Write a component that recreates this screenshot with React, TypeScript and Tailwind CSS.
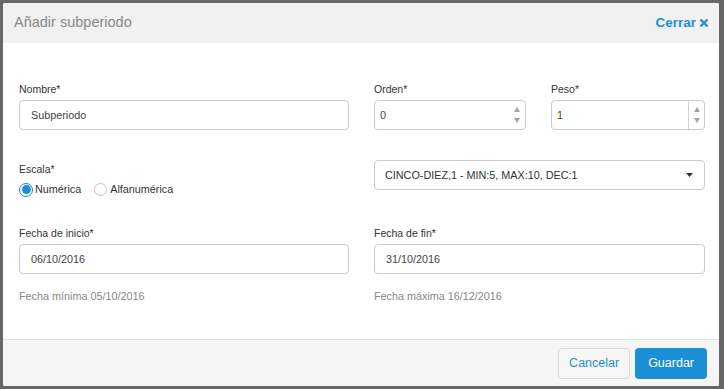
import React from 'react';

const font = { fontFamily: '"Liberation Sans", Arial, sans-serif' };

function Label({ children }: { children: React.ReactNode }) {
  return <div className="text-[10.5px] leading-[15px] text-[#333] mb-[3px]">{children}</div>;
}

function TextBox({ value }: { value: string }) {
  return (
    <div className="h-[30px] border border-[#ccc] rounded-[4px] bg-white flex items-center pl-[11px] text-[10.8px] text-[#444]">
      {value}
    </div>
  );
}

function NumberBox({ value, divider }: { value: string; divider?: boolean }) {
  return (
    <div className="h-[30px] border border-[#ccc] rounded-[4px] bg-white flex items-center text-[10.8px] text-[#444]">
      <span className="flex-1 pl-[5px]">{value}</span>
      <div
        className={
          'h-full w-[16px] flex flex-col items-center justify-center gap-[6px] ' +
          (divider ? 'border-l border-[#d4d4d4]' : '')
        }
      >
        <svg width="6" height="5" viewBox="0 0 6 5">
          <path d="M3 0L6 5H0z" fill="#a3a3a3" />
        </svg>
        <svg width="6" height="5" viewBox="0 0 6 5">
          <path d="M0 0H6L3 5z" fill="#a3a3a3" />
        </svg>
      </div>
    </div>
  );
}

export default function App() {
  return (
    <div style={font} className="w-[724px] h-[389px] bg-[#676767] pt-[3px] pl-[3px] overflow-hidden">
      <div className="w-[716px] h-[383px] bg-white flex flex-col rounded-[2px] overflow-hidden">
        {/* header */}
        <div className="h-[40px] bg-[#f1f1f1] flex items-center justify-between pl-[11px] pr-[10px]">
          <span className="text-[14.5px] text-[#888]">Añadir subperiodo</span>
          <button className="flex items-center gap-[3px] text-[13.5px] font-bold text-[#1e8fd5]">
            Cerrar
            <svg width="10" height="10" viewBox="0 0 10 10">
              <path d="M1.5 1.5L8.5 8.5M8.5 1.5L1.5 8.5" stroke="#1e8fd5" strokeWidth="2.4" />
            </svg>
          </button>
        </div>

        {/* body */}
        <div className="flex-1 pl-4 pr-[14px] pt-[39px]">
          <div className="grid grid-cols-[330px_331px] gap-x-[25px]">
            <div>
              <Label>Nombre*</Label>
              <TextBox value="Subperiodo" />
            </div>
            <div className="grid grid-cols-[152px_154px] gap-x-[25px]">
              <div>
                <Label>Orden*</Label>
                <NumberBox value="0" />
              </div>
              <div>
                <Label>Peso*</Label>
                <NumberBox value="1" divider />
              </div>
            </div>
          </div>

          <div className="grid grid-cols-[330px_331px] gap-x-[25px] mt-[30px]">
            <div className="pt-[2px]">
              <div className="text-[10.5px] leading-[15px] text-[#333]">Escala*</div>
              <div className="mt-[4px] h-[17px] flex items-center text-[10.8px] text-[#333]">
                <span className="w-[14px] h-[14px] rounded-full border border-[#1a84cf] bg-white p-[1.5px] flex">
                  <span className="flex-1 rounded-full bg-[#1e8fd5]" />
                </span>
                <span className="ml-[2px]">Numérica</span>
                <span className="ml-[13px] w-[13px] h-[13px] rounded-full border border-[#c4c4c4] bg-white" />
                <span className="ml-[3px]">Alfanumérica</span>
              </div>
            </div>
            <div>
              <div className="h-[30px] border border-[#ccc] rounded-[4px] bg-white flex items-center pl-[10px] pr-[11px] text-[10.8px] text-[#333]">
                <span className="flex-1">CINCO-DIEZ,1 - MIN:5, MAX:10, DEC:1</span>
                <svg width="7" height="4" viewBox="0 0 7 4">
                  <path d="M0 0H7L3.5 4z" fill="#333" />
                </svg>
              </div>
            </div>
          </div>

          <div className="grid grid-cols-[330px_331px] gap-x-[25px] mt-[28px]">
            <div>
              <Label>Fecha de inicio*</Label>
              <TextBox value="06/10/2016" />
              <div className="mt-[15px] text-[10.8px] leading-[15px] text-[#888]">Fecha mínima 05/10/2016</div>
            </div>
            <div>
              <Label>Fecha de fin*</Label>
              <TextBox value="31/10/2016" />
              <div className="mt-[15px] text-[10.8px] leading-[15px] text-[#888]">Fecha máxima 16/12/2016</div>
            </div>
          </div>
        </div>

        {/* footer */}
        <div className="h-[47px] border-t border-[#e3e3e3] bg-[#f5f5f5] flex items-center justify-end gap-[5px] pr-[12px]">
          <button className="h-[31px] px-[10px] rounded-[4px] border border-[#dadada] bg-[#f6f6f6] text-[12.5px] text-[#1e8fd5]">
            Cancelar
          </button>
          <button className="h-[31px] px-[13px] rounded-[4px] bg-[#1b8fd6] text-[12.5px] text-white">
            Guardar
          </button>
        </div>
      </div>
    </div>
  );
}
